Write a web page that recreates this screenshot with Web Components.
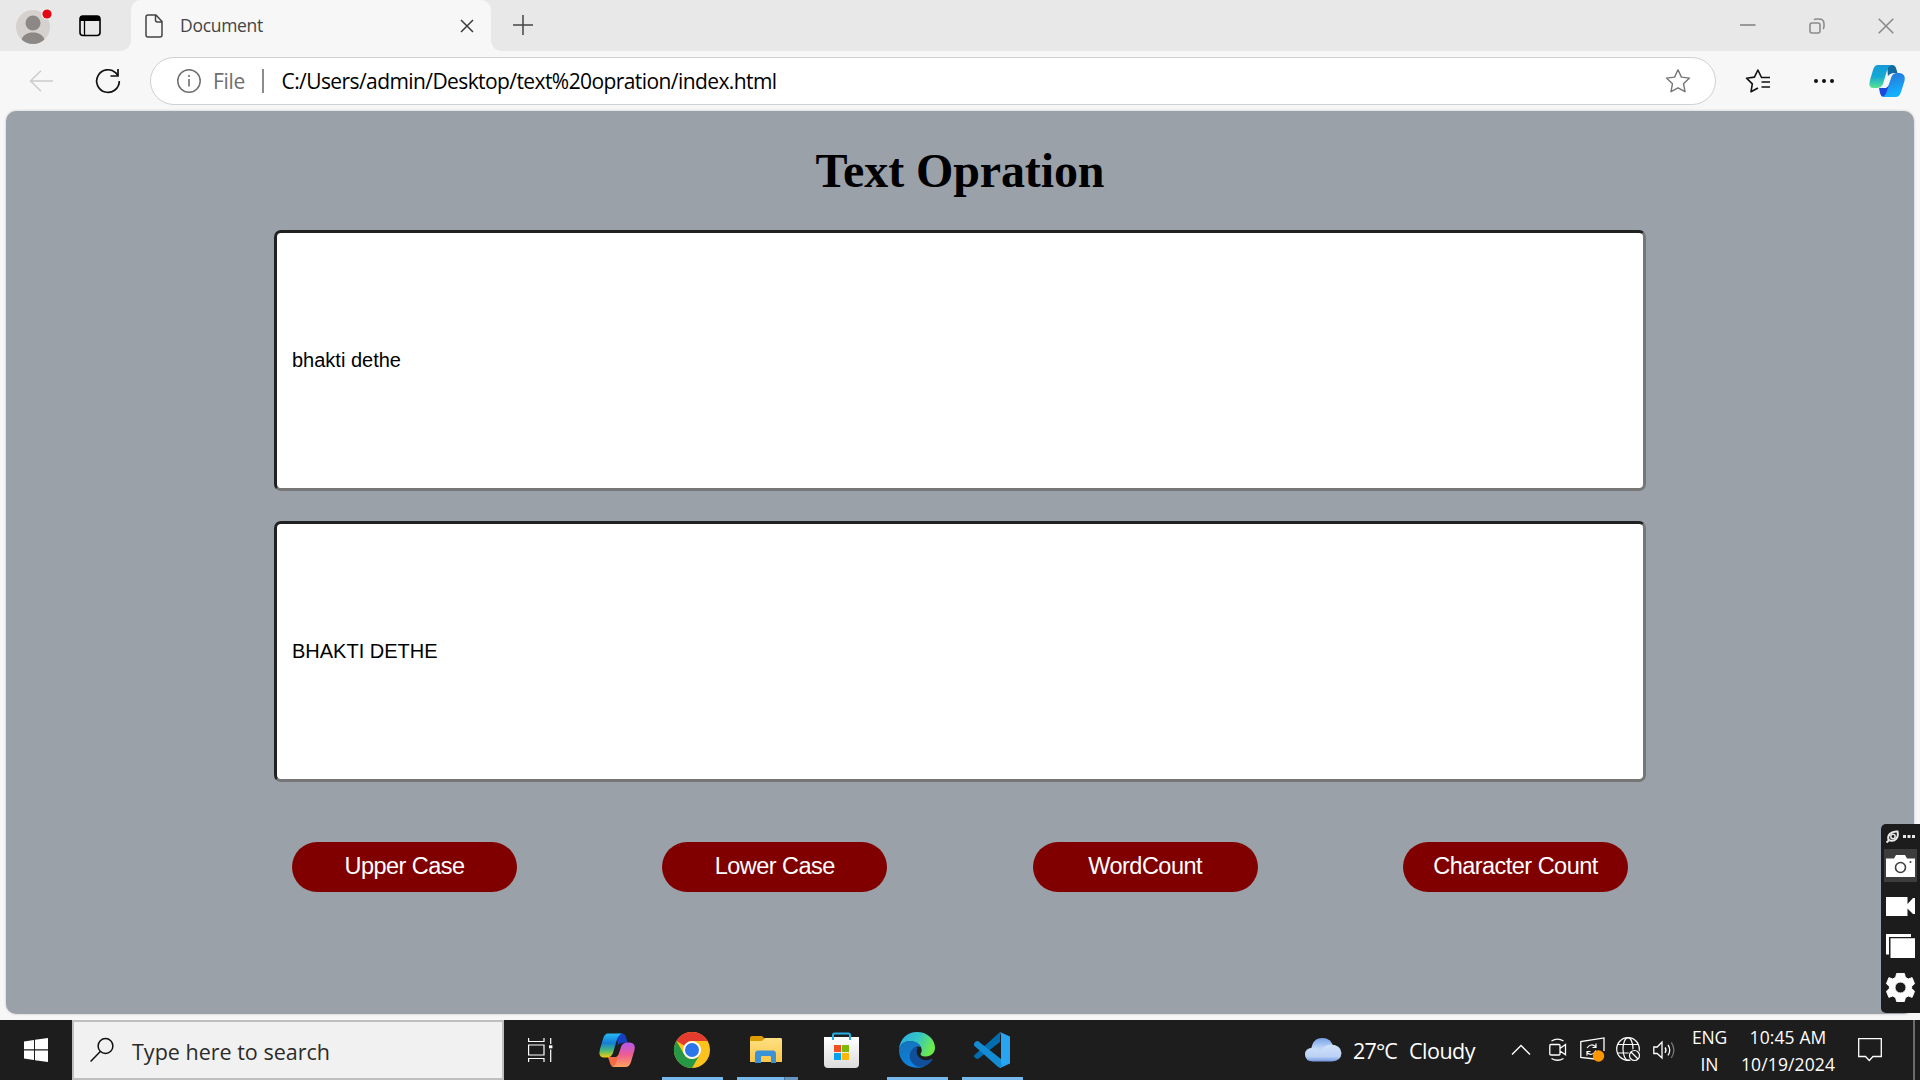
<!DOCTYPE html>
<html lang="en">
<head>
<meta charset="utf-8">
<title>Document</title>
<style>
html,body{margin:0;height:100%;overflow:hidden;background:#f7f7f7}
</style>
</head>
<body>
<desktop-screen></desktop-screen>
<script>
const define = (name, html, setup) => customElements.define(name, class extends HTMLElement {
  constructor() {
    super();
    const t = document.createElement('template');
    t.innerHTML = html;
    this.attachShadow({ mode: 'open' }).append(t.content.cloneNode(true));
  }
  connectedCallback() { if (setup) setup(this, this.shadowRoot); }
});

/* Label of a known width: spreads its letters evenly to fill it. */
define('fit-text', `<style>:host{display:block;flex:none;white-space:pre;font-family:"Open Sans","Noto Sans",sans-serif;line-height:1.2}span{display:inline-block}</style><span><slot></slot></span>`,
  (el, root) => {
    const s = root.querySelector('span');
    const w = +el.getAttribute('w');
    el.style.width = w + 'px';
    const size = el.getAttribute('size');
    if (size) el.style.fontSize = size + 'px';
    s.style.letterSpacing = (w - s.getBoundingClientRect().width) / el.textContent.length + 'px';
  });

const icons = {
  avatar: [40, 40, `<circle cx="18" cy="21" r="17" fill="#d4d1ce"/><clipPath id="c"><circle cx="18" cy="21" r="17"/></clipPath><g clip-path="url(#c)" fill="#8b8885"><circle cx="18" cy="17" r="7.5"/><path d="M6 36C7 29 12 26.500 18 26.500S29 29 30 36C27 39 9 39 6 36Z"/></g><circle cx="32" cy="8" r="5.600" fill="#f5f5f5"/><circle cx="32" cy="8" r="4.600" fill="#e30613"/>`],
  tabs: [22, 22, `<rect x="1" y="1" width="20" height="19.500" rx="3" fill="none" stroke="#000" stroke-width="1.600"/><path d="M1 6V4a3 3 0 0 1 3-3H18a3 3 0 0 1 3 3V6Z" fill="#000"/><path d="M5.500 6V20" stroke="#000" stroke-width="1.300"/>`],
  page: [18, 24, `<path d="M3 1H11L17 7.500V21Q17 23 15 23H3Q1 23 1 21V3Q1 1 3 1ZM10.500 1V6Q10.500 8 12.500 8H17" fill="none" stroke="#444" stroke-width="1.500" stroke-linejoin="round"/>`],
  close: [14, 14, `<path d="M1 1L13 13M13 1L1 13" stroke="#3b3b3b" stroke-width="1.500"/>`],
  plus: [22, 22, `<path d="M11 1V21M1 11H21" stroke="#444" stroke-width="1.500"/>`],
  min: [16, 16, `<path d="M0 7H15.500" stroke="#8b8b8b" stroke-width="1.700"/>`],
  restore: [16, 16, `<rect x="1" y="5" width="10" height="10" rx="2" fill="none" stroke="#8b8b8b" stroke-width="1.600"/><path d="M5 1.700Q6 1 8 1H10Q15 1 15 6V8Q15 10 14 11" fill="none" stroke="#8b8b8b" stroke-width="1.600"/>`],
  wclose: [16, 16, `<path d="M.7.7L15.300 15.300M15.300.7L.7 15.300" stroke="#8b8b8b" stroke-width="1.600"/>`],
  back: [25, 22, `<path d="M24 11H1.500M12 .7L1.500 11L12 21.300" fill="none" stroke="#cbcbcb" stroke-width="1.400"/>`],
  reload: [26, 26, `<path d="M24.300 13A11.300 11.300 0 1 1 20.800 4.900L23 7.500" fill="none" stroke="#111" stroke-width="1.700"/><path d="M23 1V8H15.500" fill="none" stroke="#111" stroke-width="1.700"/>`],
  info: [24, 24, `<circle cx="12" cy="12" r="11.200" fill="none" stroke="#6e6e6e" stroke-width="1.500"/><path d="M12 10V17.500" stroke="#6e6e6e" stroke-width="1.600"/><circle cx="12" cy="7" r="1.100" fill="#6e6e6e"/>`],
  star: [26, 26, `<path d="M13 1.800L16.400 9.100L24.500 10.100L18.500 15.700L20 23.700L13 19.800L6 23.700L7.500 15.700L1.500 10.100L9.600 9.100Z" fill="none" stroke="#757575" stroke-width="1.400" stroke-linejoin="round"/>`],
  favs: [26, 26, `<path d="M16.500 9.500L12.900 2L9.400 9.100L1.500 10.200L7.300 15.800L6 23.800L13 20" fill="none" stroke="#111" stroke-width="1.600" stroke-linejoin="round"/><path d="M16 9.500H25M16.500 14H25M16.500 19H25" stroke="#111" stroke-width="1.600"/>`],
  dots: [22, 6, `<g fill="#111"><circle cx="3" cy="3" r="2"/><circle cx="11" cy="3" r="2"/><circle cx="19" cy="3" r="2"/></g>`],
  copilot: [36, 34, `<linearGradient id="a" x2="0" y2="1"><stop stop-color="#159bd8"/><stop offset=".5" stop-color="#13a8d5"/><stop offset="1" stop-color="#5be38f"/></linearGradient><linearGradient id="b" x2=".3" y2="1"><stop stop-color="#2b6fd3"/><stop offset="1" stop-color="#12b2ff"/></linearGradient><path d="M18 1H23Q26 1 27 4L28.500 9H25Q21 9 19 13Z" fill="#126a9e"/><path d="M10 24H17Q20 22 21 18L20 33H15Q12 33 11 29Z" fill="#1d49d8"/><path d="M9 1H23Q19 2 17.500 8L14 20Q12 24 8 24H4Q-1 24 1 16L4 6Q5.500 1 9 1Z" fill="url(#a)"/><path d="M28 9H31Q37 10 35.500 17L32 28Q30.500 33 26.500 33H13Q16.500 32 18 27L22 14Q23.500 9 28 9Z" fill="url(#b)"/><path d="M20.500 10.500H23Q21.500 12 21 14L18.500 22Q17.500 24 14.800 23.500L17.500 15Q18.500 11.500 20.500 10.500Z" fill="#f7f7f7"/>`],
  copilotColor: [36, 34, `<linearGradient id="a" x2="0" y2="1"><stop stop-color="#27b8f4"/><stop offset=".4" stop-color="#137ed8"/><stop offset=".7" stop-color="#48b77b"/><stop offset="1" stop-color="#f5ce08"/></linearGradient><linearGradient id="b" x2="0" y2="1"><stop stop-color="#b257ee"/><stop offset=".5" stop-color="#ee5d91"/><stop offset="1" stop-color="#ffa35c"/></linearGradient><path d="M18 .5H23Q26 .5 27 4L28.500 9.500H25Q21 10 19 14Z" fill="#173fc0"/><path d="M9 24H17Q20 22 21 18L20 34H15Q12 34 11 30Z" fill="#f46a45"/><path d="M9 .5H23Q19 2 17.500 8L14 20Q12 24.500 8 24.500H4Q-1 24 1 16L4 6Q5.500 .5 9 .5Z" fill="url(#a)"/><path d="M28 9.500H31Q37 10 35.500 17L32 29Q30.500 34 26.500 34H13Q16.500 33 18 27L22 14Q23.500 9.500 28 9.500Z" fill="url(#b)"/><path d="M20.500 10.500H23Q21.500 12 21 14L18.500 22Q17.500 24.500 14.800 24L17.500 15Q18.500 11.500 20.500 10.500Z" fill="#1d1d1d"/>`],
  windows: [24, 24, `<path d="M0 3.400L10 2V11.300H0ZM11 1.800L24 0V11.300H11ZM0 12.400H10V22L0 20.600ZM11 12.400H24V24L11 22.200Z" fill="#fff"/>`],
  search: [24, 24, `<circle cx="15.500" cy="8" r="7.400" fill="none" stroke="#111" stroke-width="1.500"/><path d="M10.300 13.400L.6 23.400" stroke="#111" stroke-width="1.500"/>`],
  taskview: [25, 24, `<path d="M.6 0V3.500H16V0M.6 24V20.500H16V24M.6 7H16V17H.6ZM22.700 0V6M22.700 11.500V24" fill="none" stroke="#fff" stroke-width="1.200"/><rect x="21" y="7.300" width="3.400" height="3" fill="#fff"/>`],
  chrome: [36, 36, `<circle cx="18" cy="18" r="18" fill="#fcc31e"/><path d="M2.400 9A18 18 0 0 1 33.600 9H18A9 9 0 0 0 10.200 13.500Z" fill="#e33b2e"/><path d="M2.400 9A18 18 0 0 0 18 36L25.800 22.500A9 9 0 0 1 10.200 22.500Z" fill="#259845"/><circle cx="18" cy="18" r="9" fill="#fff"/><circle cx="18" cy="18" r="7" fill="#2d76ea"/>`],
  folder: [33, 28, `<linearGradient id="a" x2="0" y2="1"><stop stop-color="#ffe083"/><stop offset="1" stop-color="#fbc748"/></linearGradient><path d="M0 2Q0 0 2 0H12L15 3V7H0Z" fill="#dd9c00"/><path d="M0 5H12L15 2H31Q32 2 32 4V26H0Z" fill="url(#a)"/><path d="M5 27V18Q5 14.500 8 14.500H23Q26 14.500 26 18V27H21V21Q21 20 20 20H12Q11 20 11 21V27Z" fill="#3b92d7"/>`],
  store: [36, 36, `<linearGradient id="a" x2="0" y2="1"><stop stop-color="#fff"/><stop offset="1" stop-color="#dcdcdc"/></linearGradient><path d="M0 5H35V32Q35 36 31 36H4Q0 36 0 32Z" fill="url(#a)"/><path d="M9 8V3Q9 1.500 10.500 1.500H24.500Q26 1.500 26 3V8" fill="none" stroke="#24aee8" stroke-width="2"/><path d="M10 13h7v7h-7Z" fill="#f04e23"/><path d="M18 13h7v7h-7Z" fill="#7db80b"/><path d="M10 21h7v7h-7Z" fill="#05a1ed"/><path d="M18 21h7v7h-7Z" fill="#fdb70a"/>`],
  edge: [36, 36, `<linearGradient id="a" x2="1" y2=".35"><stop stop-color="#2aa8ea"/><stop offset=".55" stop-color="#34c6c4"/><stop offset="1" stop-color="#6bea50"/></linearGradient><linearGradient id="b" x2=".4" y2="1"><stop stop-color="#1672b5"/><stop offset="1" stop-color="#0d82e0"/></linearGradient><path d="M0 17C1 7 8 0 18 0C29 0 36 8 36 15.500C36 21 32 24.500 27 24.500C23 24.500 20.500 23 22 21C24 18 22 13.500 18 11C12 7.500 3 9 0 17Z" fill="url(#a)"/><path d="M0 18C1 11 6 8.500 12 9C17 9.500 21 12 22 15C17 13 13 16 13 22C13 29 20 34 26 34C17 39 0 34 0 18Z" fill="url(#b)"/><path d="M17 14.500C8 19 9 30 18 34.500C25 36.500 31 32 33.500 27.500C34 26.500 33 26.500 32 27C24 31 15 24 18.500 16Z" fill="#114f9a"/>`],
  code: [36, 36, `<path d="M26 0V10L4 27Q2 27 0 24.500V23.500Z" fill="#006db1"/><path d="M0 12Q1 9 4 9L27 27V36Q25 36 23 34L0 13.500Z" fill="#148cd4"/><path d="M26 0L36 4.500V31.500L26 36Q28 34 27 31V4.500Q27 2 26 0Z" fill="#29a4f1"/>`],
  cloud: [37, 24, `<linearGradient id="a" x2="0" y2="1"><stop stop-color="#76a1e8"/><stop offset=".5" stop-color="#bed6f6"/><stop offset="1" stop-color="#b5cff5"/></linearGradient><linearGradient id="b" x2="0" y2="1"><stop stop-color="#cfe2fa"/><stop offset=".7" stop-color="#bcd2f6"/><stop offset="1" stop-color="#7396de"/></linearGradient><path d="M6 13Q7 0 17.500 0Q26 0 28.500 9L25 20H6Z" fill="url(#a)"/><path d="M8 9.500Q13 9.500 16 13Q19 7 26 6.500Q36 7 36.500 15Q36 23 27 23.500H8Q0 23 0 16.500Q0 10 8 9.500Z" fill="url(#b)"/>`],
  chevron: [20, 12, `<path d="M1 10.500L10 1.500L19 10.500" fill="none" stroke="#fff" stroke-width="1.400"/>`],
  meet: [18, 24, `<path d="M1.700 6.500H10Q11 6.500 11 7.500V16Q11 17 10 17H2Q.8 17 .8 16V7.500Q.8 6.500 1.700 6.500ZM11 10.500L16.500 6.500V16.800L11 13M2.500 3Q8.500-.8 14.500 3M2.500 20.500Q8.500 24 14.500 20.500" fill="none" stroke="#fff" stroke-width="1.300"/>`],
  update: [26, 26, `<path d="M15 22L.8 20.500V4.500L24 .9V14" fill="none" stroke="#fff" stroke-width="1.300"/><path d="M7 11Q11 5.500 16 10M16 6.500V10.500H12.500M16 13.500Q12 20 7 15.500M7 18.500V14.500H10.500" fill="none" stroke="#fff" stroke-width="1.200"/><circle cx="18.500" cy="19" r="5.700" fill="#ff9800"/>`],
  globe: [26, 26, `<g fill="none" stroke="#fff" stroke-width="1.200"><circle cx="12" cy="12" r="11.300"/><ellipse cx="12" cy="12" rx="5" ry="11.300"/><path d="M2 7.500H22M2 16H22"/></g><circle cx="18.500" cy="18.500" r="6.500" fill="#1d1d1d"/><circle cx="18.500" cy="18.500" r="5" fill="none" stroke="#fff" stroke-width="1.200"/><path d="M15 15L22 22" stroke="#fff" stroke-width="1.200"/>`],
  speaker: [24, 20, `<path d="M.8 7H4.200L9 2V18L4.200 13.500H.8Z" fill="none" stroke="#fff" stroke-width="1.300"/><path d="M12 7.500Q14 10 12 12.800M15 4.800Q18.500 10 15 15.300" fill="none" stroke="#fff" stroke-width="1.300"/><path d="M18.300 2.300Q23.500 10 18.300 18" fill="none" stroke="#777" stroke-width="1.300"/>`],
  notify: [24, 24, `<path d="M.7.7H23.300V18.500H15L11.300 22.500L7.500 18.500H.7Z" fill="none" stroke="#fff" stroke-width="1.300"/>`],
  leaf: [14, 14, `<path d="M2.500 10C1 5 5 1 11.500 1.500C13 7.500 9 12 4 10.500M.5 12.500L4 9.500" fill="none" stroke="#e8e8e8" stroke-width="2"/><circle cx="7" cy="6.500" r="2.200" fill="none" stroke="#e8e8e8" stroke-width="1.500"/>`],
  more3: [12, 4, `<path d="M0 0h3v3H0ZM4.500 0h3v3h-3ZM9 0h3v3H9Z" fill="#e8e8e8"/>`],
  camera: [29, 22, `<path d="M0 3.500H8L10 0H19L21 3.500H29V22H0Z" fill="#fff"/><circle cx="14.500" cy="12.500" r="5" fill="#fff" stroke="#3d3d3d" stroke-width="1.600"/><circle cx="24.500" cy="7" r="1" fill="#3d3d3d"/>`],
  video: [29, 19, `<path d="M0 0H21.500V7L27 1H29V17H27L21.500 11.500V19H0Z" fill="#fff"/>`],
  gallery: [29, 24, `<path d="M0 0H25V3H3V20.500H0ZM4.500 4.200H29V24H4.500Z" fill="#fff"/>`],
  gear: [29, 29, `<path transform="scale(.967)" fill-rule="evenodd" stroke="#fff" stroke-linejoin="round" d="M11 .5H19L20 4.500L23 6.200L27 4.800L29.500 11L26.500 14V16L29.500 19L27 25.200L23 23.800L20 25.500L19 29.500H11L10 25.500L7 23.800L3 25.200L.5 19L3.500 16V14L.5 11L3 4.800L7 6.200L10 4.500ZM15 9.300A5.700 5.700 0 1 0 15 20.700A5.700 5.700 0 1 0 15 9.300Z" fill="#fff"/>`]
};
define('ui-icon', `<style>:host{display:block;flex:none}span,svg{display:block;overflow:visible}</style><span></span>`, (el, root) => {
  const [w, h, body] = icons[el.getAttribute('name')];
  root.querySelector('span').innerHTML = `<svg width="${w}" height="${h}" viewBox="0 0 ${w} ${h}">${body}</svg>`;
});

define('tab-strip', `<style>
:host{display:flex;height:51px;background:#e8e8e8}
.left{display:flex;width:131px;padding:6px 0 0 15px;gap:19px;box-sizing:border-box;flex:none}
.left ui-icon+ui-icon{margin-top:9px;margin-left:5px}
.tab{position:relative;display:flex;box-sizing:border-box;width:360px;padding:14px 0 0 14px;background:#f7f7f7;border-radius:10px 10px 0 0}
.tab:before,.tab:after{content:"";position:absolute;bottom:0;width:10px;height:10px;background:radial-gradient(circle at 0 0,transparent 9.500px,#f7f7f7 10px)}
.tab:before{left:-10px}.tab:after{right:-10px;background:radial-gradient(circle at 100% 0,transparent 9.500px,#f7f7f7 10px)}
fit-text{margin:1px 0 0 17px;color:#444}
.x{margin:5px 0 0 auto;padding-right:17px}
.plus{margin:14px 0 0 21px}
.win{display:flex;gap:53px;margin:18px 26.500px 0 auto}
</style>
<div class="left"><ui-icon name="avatar"></ui-icon><ui-icon name="tabs"></ui-icon></div>
<div class="tab"><ui-icon name="page"></ui-icon><fit-text w="83" size="17.500">Document</fit-text><ui-icon class="x" name="close"></ui-icon></div>
<ui-icon class="plus" name="plus"></ui-icon>
<div class="win"><ui-icon name="min"></ui-icon><ui-icon name="restore"></ui-icon><ui-icon name="wclose"></ui-icon></div>`);

define('tool-bar', `<style>
:host{display:flex;align-items:center;height:60px;background:#f7f7f7;box-sizing:border-box;padding:0 15px 0 29px}
.reload{margin:0 29px 0 41px}
.addr{flex:none;display:flex;align-items:center;box-sizing:border-box;width:1566px;height:48px;border:1px solid #d0d0d0;border-radius:24px;background:#fff;padding:0 24px 0 26px;color:#000}
.addr fit-text{padding-top:2px}
.file{color:#6e6e6e;margin-left:12px}
i{width:1.500px;height:24px;background:#8c8c8c;margin:0 18px 0 17px}
.star{margin-left:auto}
.favs{margin-left:29px}.dots{margin-left:42px}.cop{margin-left:auto}
</style>
<ui-icon name="back"></ui-icon><ui-icon class="reload" name="reload"></ui-icon>
<div class="addr"><ui-icon name="info"></ui-icon><fit-text class="file" w="32" size="21">File</fit-text><i></i><fit-text w="495" size="21">C:/Users/admin/Desktop/text%20opration/index.html</fit-text><ui-icon class="star" name="star"></ui-icon></div>
<ui-icon class="favs" name="favs"></ui-icon><ui-icon class="dots" name="dots"></ui-icon><ui-icon class="cop" name="copilot"></ui-icon>`);

define('text-field', `<style>
:host{display:flex;align-items:center;box-sizing:border-box;height:261px;background:#fff;border:3px solid;border-color:#212121 #767676 #767676 #212121;border-radius:7px;padding:0 15px;font:20px/23px "Liberation Sans",Arial,sans-serif;color:#000}
</style><slot></slot>`);

define('action-button', `<style>
:host{display:flex;justify-content:center;box-sizing:border-box;width:225px;height:50px;padding-top:11px;border-radius:25px;background:#800000;color:#fff;font:23.500px/26px "Liberation Sans",Arial,sans-serif;letter-spacing:-.53px;white-space:nowrap}
</style><slot></slot>`);

define('web-page', `<style>
:host{display:block;box-sizing:border-box;width:1908px;height:903px;margin:0 6px 6px;padding:0 268px;background:#9aa1a9;border-radius:10px;box-shadow:0 0 3px #0003;overflow:hidden}
h1{margin:32px 0;text-align:center;font:bold 48px/55px "Liberation Serif","Times New Roman",serif;letter-spacing:-.1px;color:#000}
text-field+text-field{margin-top:30px}
.row{display:flex;justify-content:space-between;padding:60px 18px 0}
</style>
<h1>Text Opration</h1>
<text-field>bhakti dethe</text-field><text-field>BHAKTI DETHE</text-field>
<div class="row"><action-button>Upper Case</action-button><action-button>Lower Case</action-button><action-button>WordCount</action-button><action-button>Character Count</action-button></div>`);

define('capture-dock', `<style>
:host{position:absolute;right:0;top:824px;display:flex;flex-direction:column;align-items:center;box-sizing:border-box;width:39px;height:189px;background:#1c1c1c;border-radius:5px 0 0 5px}
.top{display:flex;align-items:center;gap:3px;height:25px}
.cam{display:flex;align-items:center;justify-content:center;width:33px;height:33px;background:#3d3d3d;margin-bottom:15px}
.gap{margin:18px 0 15px}
</style>
<div class="top"><ui-icon name="leaf"></ui-icon><ui-icon name="more3"></ui-icon></div>
<div class="cam"><ui-icon name="camera"></ui-icon></div>
<ui-icon name="video"></ui-icon><ui-icon class="gap" name="gallery"></ui-icon><ui-icon name="gear"></ui-icon>`);

define('task-app', `<style>
:host{display:flex;flex-direction:column;align-items:center;width:75px;height:60px;flex:none}
.pic{display:flex;align-items:center;justify-content:center;height:57px;padding:3px 2px 0 0;box-sizing:border-box}
.bar{width:61px;height:3px;background:transparent}
:host([open]) .bar{background:#76b9ed}
:host([open=many]) .bar{background:linear-gradient(90deg,#76b9ed 47px,#46739a 47px 48px,#6696bf 48px)}
</style><div class="pic"><slot></slot></div><div class="bar"></div>`);

define('task-bar', `<style>
:host{display:flex;height:60px;background:#1d1d1d;color:#fff}
.start{display:flex;align-items:center;justify-content:center;width:72px;flex:none}
.search{display:flex;box-sizing:border-box;width:432px;border:2px solid #bfbfbf;background:#f1f1f1;color:#2b2b2b;flex:none;padding:16px 0 0 16px}
.search fit-text{margin:1px 0 0 18px}
.view{display:flex;align-items:center;justify-content:center;width:72px;margin-right:4px;flex:none}
.tray{display:flex;align-items:center;margin-left:auto}
.stack{display:flex;flex-direction:column;align-items:center;gap:6px;padding-top:1px;line-height:21px}
.stack fit-text{line-height:21px}
.end{width:7px;height:60px;border-left:2px solid #6b6b6b;box-sizing:border-box}
</style>
<div class="start"><ui-icon name="windows"></ui-icon></div>
<div class="search"><ui-icon name="search"></ui-icon><fit-text w="198" size="21.500">Type here to search</fit-text></div>
<div class="view"><ui-icon name="taskview"></ui-icon></div>
<task-app><ui-icon name="copilotColor"></ui-icon></task-app>
<task-app open><ui-icon name="chrome"></ui-icon></task-app>
<task-app open="many"><ui-icon name="folder"></ui-icon></task-app>
<task-app><ui-icon name="store"></ui-icon></task-app>
<task-app open><ui-icon name="edge"></ui-icon></task-app>
<task-app open><ui-icon name="code"></ui-icon></task-app>
<div class="tray">
<ui-icon name="cloud" style="margin-right:11px"></ui-icon>
<fit-text w="44" size="21.500" style="margin-right:12px;padding-top:2px">27°C</fit-text>
<fit-text w="66" size="21.500" style="margin-right:36px;padding-top:2px">Cloudy</fit-text>
<ui-icon name="chevron" style="margin-right:18px"></ui-icon>
<ui-icon name="meet" style="margin-right:13px"></ui-icon>
<ui-icon name="update" style="margin-right:10px"></ui-icon>
<ui-icon name="globe" style="margin-right:11px"></ui-icon>
<ui-icon name="speaker" style="margin-right:15px"></ui-icon>
<div class="stack" style="margin-right:14px"><fit-text w="35" size="17.500">ENG</fit-text><fit-text w="18" size="17.500">IN</fit-text></div>
<div class="stack" style="margin-right:23px"><fit-text w="77" size="17.500">10:45 AM</fit-text><fit-text w="94" size="17.500">10/19/2024</fit-text></div>
<ui-icon name="notify" style="margin-right:31px"></ui-icon>
<div class="end"></div>
</div>`);

define('desktop-screen', `<style>:host{position:relative;display:flex;flex-direction:column;width:1920px;height:1080px;overflow:hidden;background:#f7f7f7}tab-strip,tool-bar,web-page,task-bar{flex:none}</style>
<tab-strip></tab-strip><tool-bar></tool-bar><web-page></web-page><task-bar></task-bar><capture-dock></capture-dock>`);
</script>
</body>
</html>
